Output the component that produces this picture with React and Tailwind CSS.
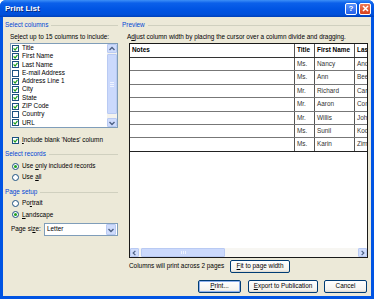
import React from 'react';

const columns = [
  { name: 'Title', on: true },
  { name: 'First Name', on: true },
  { name: 'Last Name', on: true },
  { name: 'E-mail Address', on: false },
  { name: 'Address Line 1', on: true },
  { name: 'City', on: true },
  { name: 'State', on: true },
  { name: 'ZIP Code', on: true },
  { name: 'Country', on: false },
  { name: 'URL', on: true },
];

const people = [
  ['Ms.', 'Nancy', 'Anderson'],
  ['Ms.', 'Ann', 'Beebe'],
  ['Mr.', 'Richard', 'Carey'],
  ['Mr.', 'Aaron', 'Con'],
  ['Mr.', 'Willis', 'Johnson'],
  ['Ms.', 'Sunil', 'Koduri'],
  ['Ms.', 'Karin', 'Zimprich'],
];

function Check({ on }) {
  return (
    <span className="w-[7px] h-[7px] border border-[#1c5180] bg-white flex items-center justify-center shrink-0">
      {on && (
        <svg width="5" height="5" viewBox="0 0 7 7">
          <path d="M0.8 3.4 L2.9 5.6 L6.3 1.1" stroke="#21a121" strokeWidth="1.7" fill="none" />
        </svg>
      )}
    </span>
  );
}

function Radio({ on }) {
  return (
    <span className="w-[7px] h-[7px] rounded-full border border-[#1c5180] bg-white flex items-center justify-center shrink-0">
      {on && <span className="w-[3px] h-[3px] rounded-full bg-[#21a121]" />}
    </span>
  );
}

function Heading({ children }) {
  return (
    <div className="flex items-center h-[8px] leading-[8px]">
      <span className="text-[#0046d5]">{children}</span>
      <span className="flex-1 h-px bg-[#d0d0bf] ml-[3px]" />
    </div>
  );
}

function Arrow({ dir }) {
  const d = {
    up: 'M1.5 5 L4 2.5 L6.5 5',
    down: 'M1.5 3 L4 5.5 L6.5 3',
    left: 'M5 1.5 L2.5 4 L5 6.5',
    right: 'M3 1.5 L5.5 4 L3 6.5',
  }[dir];
  return (
    <svg width="8" height="8" viewBox="0 0 8 8">
      <path d={d} stroke="#4d6185" strokeWidth="1.4" fill="none" />
    </svg>
  );
}

function Btn({ children, w, primary }) {
  return (
    <div
      className={`h-[13px] ${w} rounded-[2px] border border-[#003c74] bg-[linear-gradient(to_bottom,#ffffff,#f5f4ef_80%,#dcd7cc)] flex items-center justify-center leading-none whitespace-nowrap ${
        primary ? 'shadow-[inset_0_0_0_1px_#8fb1ee]' : ''
      }`}
    >
      {children}
    </div>
  );
}

export default function App() {
  return (
    <div className="w-[374px] h-[299px] flex flex-col bg-[#0054e3] rounded-t-[6px] overflow-hidden font-['Liberation_Sans',Arial,sans-serif] text-[6.4px] text-black">
      {/* Title bar */}
      <div className="h-[17px] flex items-center pl-[5px] pr-[3px] bg-[linear-gradient(to_bottom,#3d8ff7_0%,#0b60ea_18%,#0054e3_55%,#0050da_85%,#0040b8_100%)]">
        <span className="text-white font-bold text-[8px] [text-shadow:1px_1px_0_#0a2a7a]">Print List</span>
        <div className="ml-auto flex gap-[2px]">
          <div className="w-[12px] h-[12px] rounded-[2px] border border-white bg-[linear-gradient(to_bottom,#5b93fb,#2360e8)] flex items-center justify-center text-white font-bold text-[8px] leading-none">
            ?
          </div>
          <div className="w-[12px] h-[12px] rounded-[2px] border border-white bg-[linear-gradient(to_bottom,#ee7a55,#d8421e)] flex items-center justify-center">
            <svg width="7" height="7" viewBox="0 0 7 7">
              <path d="M1 1 L6 6 M6 1 L1 6" stroke="white" strokeWidth="1.5" />
            </svg>
          </div>
        </div>
      </div>

      {/* Body */}
      <div className="flex-1 mx-[3px] mb-[3px] bg-[#ece9d8] flex">
        {/* Left column */}
        <div className="w-[116px] flex flex-col">
          <div className="mt-[4px] ml-[2px] mr-[1px]">
            <Heading>Select columns</Heading>
          </div>
          <div className="ml-[7px] mt-[4px] h-[8px] leading-[8px] whitespace-nowrap">
            Se<u>l</u>ect up to 15 columns to include:
          </div>
          <div className="ml-[7px] mt-[2px] w-[108px] h-[85px] border border-[#7f9db9] bg-white flex">
            <div className="flex-1 flex flex-col">
              {columns.map((c) => (
                <div key={c.name} className="h-[8.3px] flex items-center pl-[1px] gap-[3px] leading-none">
                  <Check on={c.on} />
                  <span>{c.name}</span>
                </div>
              ))}
            </div>
            <div className="w-[10px] flex flex-col bg-[#f4f3ee]">
              <div className="h-[9px] bg-[#cfdcfc] border border-[#b9caf3] rounded-[1px] flex items-center justify-center">
                <Arrow dir="up" />
              </div>
              <div className="flex-1 my-px bg-[#cbd9fc] border border-[#b9caf3] rounded-[1px] flex flex-col items-center justify-center gap-px">
                <span className="w-[4px] h-px bg-[#eef3ff]" />
                <span className="w-[4px] h-px bg-[#eef3ff]" />
                <span className="w-[4px] h-px bg-[#eef3ff]" />
              </div>
              <div className="h-[3px]" />
              <div className="h-[9px] bg-[#cfdcfc] border border-[#b9caf3] rounded-[1px] flex items-center justify-center">
                <Arrow dir="down" />
              </div>
            </div>
          </div>
          <div className="mt-[8px] ml-[9px] h-[8px] flex items-center gap-[3px] leading-none whitespace-nowrap">
            <Check on />
            <span>
              <u>I</u>nclude blank 'Notes' column
            </span>
          </div>

          <div className="mt-[6px] ml-[2px] mr-[1px]">
            <Heading>Select records</Heading>
          </div>
          <div className="mt-[3px] ml-[9px] h-[11px] flex items-center gap-[3px] leading-none">
            <Radio on />
            <span>
              Use <u>o</u>nly included records
            </span>
          </div>
          <div className="ml-[9px] h-[11px] flex items-center gap-[3px] leading-none">
            <Radio />
            <span>
              Use <u>a</u>ll
            </span>
          </div>

          <div className="mt-[5px] ml-[2px] mr-[1px]">
            <Heading>Page setup</Heading>
          </div>
          <div className="mt-[1.5px] ml-[9px] h-[11.5px] flex items-center gap-[3px] leading-none">
            <Radio />
            <span>
              Po<u>r</u>trait
            </span>
          </div>
          <div className="ml-[9px] h-[11.5px] flex items-center gap-[3px] leading-none">
            <Radio on />
            <span>
              <u>L</u>andscape
            </span>
          </div>
          <div className="mt-[2.5px] ml-[8px] h-[13px] flex items-center leading-none">
            <span className="w-[33px]">
              Page si<u>z</u>e:
            </span>
            <div className="w-[74px] h-[13px] border border-[#7f9db9] bg-white flex items-center">
              <span className="flex-1 pl-[2px]">Letter</span>
              <div className="w-[10px] h-[11px] mr-px bg-[#cfdcfc] border border-[#b9caf3] rounded-[1px] flex items-center justify-center">
                <Arrow dir="down" />
              </div>
            </div>
          </div>
        </div>

        {/* Right column */}
        <div className="flex-1 flex flex-col">
          <div className="mt-[4px] ml-[3px] mr-[1px]">
            <Heading>Preview</Heading>
          </div>
          <div className="ml-[8px] mt-[4px] h-[8px] leading-[8px] whitespace-nowrap">
            A<u>d</u>just column width by placing the cursor over a column divide and dragging.
          </div>
          <div className="ml-[10px] mt-[2px] w-[239px] h-[215px] border border-[#1a1a1a] bg-white flex flex-col">
            <div className="flex-1 overflow-hidden">
              <div className="w-[300px]">
                <div className="h-[14px] flex border-b border-[#333] font-bold leading-none">
                  <div className="w-[165px] border-r border-[#555] flex items-center pl-[2px]">Notes</div>
                  <div className="w-[20px] border-r border-[#555] flex items-center pl-[2px]">Title</div>
                  <div className="w-[40px] border-r border-[#555] flex items-center pl-[2px] whitespace-nowrap">First Name</div>
                  <div className="w-[50px] flex items-center pl-[2px] whitespace-nowrap">Last Name</div>
                </div>
                {people.map((p, i) => (
                  <div
                    key={i}
                    className={`h-[13.4px] flex border-b leading-none ${i === people.length - 1 ? 'border-[#222]' : 'border-[#777]'}`}
                  >
                    <div className="w-[165px] border-r border-[#555]" />
                    <div className="w-[20px] border-r border-[#555] flex items-center pl-[2px] text-[#333]">{p[0]}</div>
                    <div className="w-[40px] border-r border-[#555] flex items-center pl-[2px] text-[#333]">{p[1]}</div>
                    <div className="w-[50px] flex items-center pl-[2px] text-[#333]">{p[2]}</div>
                  </div>
                ))}
              </div>
            </div>
            <div className="h-[9px] flex bg-[#f7f6f2]">
              <div className="w-[9px] bg-[#cfdcfc] border border-[#b9caf3] rounded-[1px] flex items-center justify-center">
                <Arrow dir="left" />
              </div>
              <div className="w-[84px] ml-[2px] bg-[#cbd9fc] border border-[#b9caf3] rounded-[1px] flex items-center justify-center gap-px">
                <span className="w-px h-[3px] bg-[#eef3ff]" />
                <span className="w-px h-[3px] bg-[#eef3ff]" />
                <span className="w-px h-[3px] bg-[#eef3ff]" />
              </div>
              <div className="flex-1" />
              <div className="w-[9px] bg-[#cfdcfc] border border-[#b9caf3] rounded-[1px] flex items-center justify-center">
                <Arrow dir="right" />
              </div>
            </div>
          </div>
          <div className="ml-[10px] mt-[2px] h-[13px] flex items-center leading-none">
            <span className="w-[101px] whitespace-nowrap">Columns will print across 2 pages</span>
            <Btn w="w-[60px]">
              <span>
                <u>F</u>it to page width
              </span>
            </Btn>
          </div>
          <div className="mt-[7px] mr-[4px] h-[13px] flex justify-end">
            <Btn w="w-[43px]" primary>
              <span>
                <u>P</u>rint...
              </span>
            </Btn>
            <div className="w-[7px]" />
            <Btn w="w-[70px]">
              <span>
                <u>E</u>xport to Publication
              </span>
            </Btn>
            <div className="w-[6px]" />
            <Btn w="w-[43px]">Cancel</Btn>
          </div>
        </div>
      </div>
    </div>
  );
}
